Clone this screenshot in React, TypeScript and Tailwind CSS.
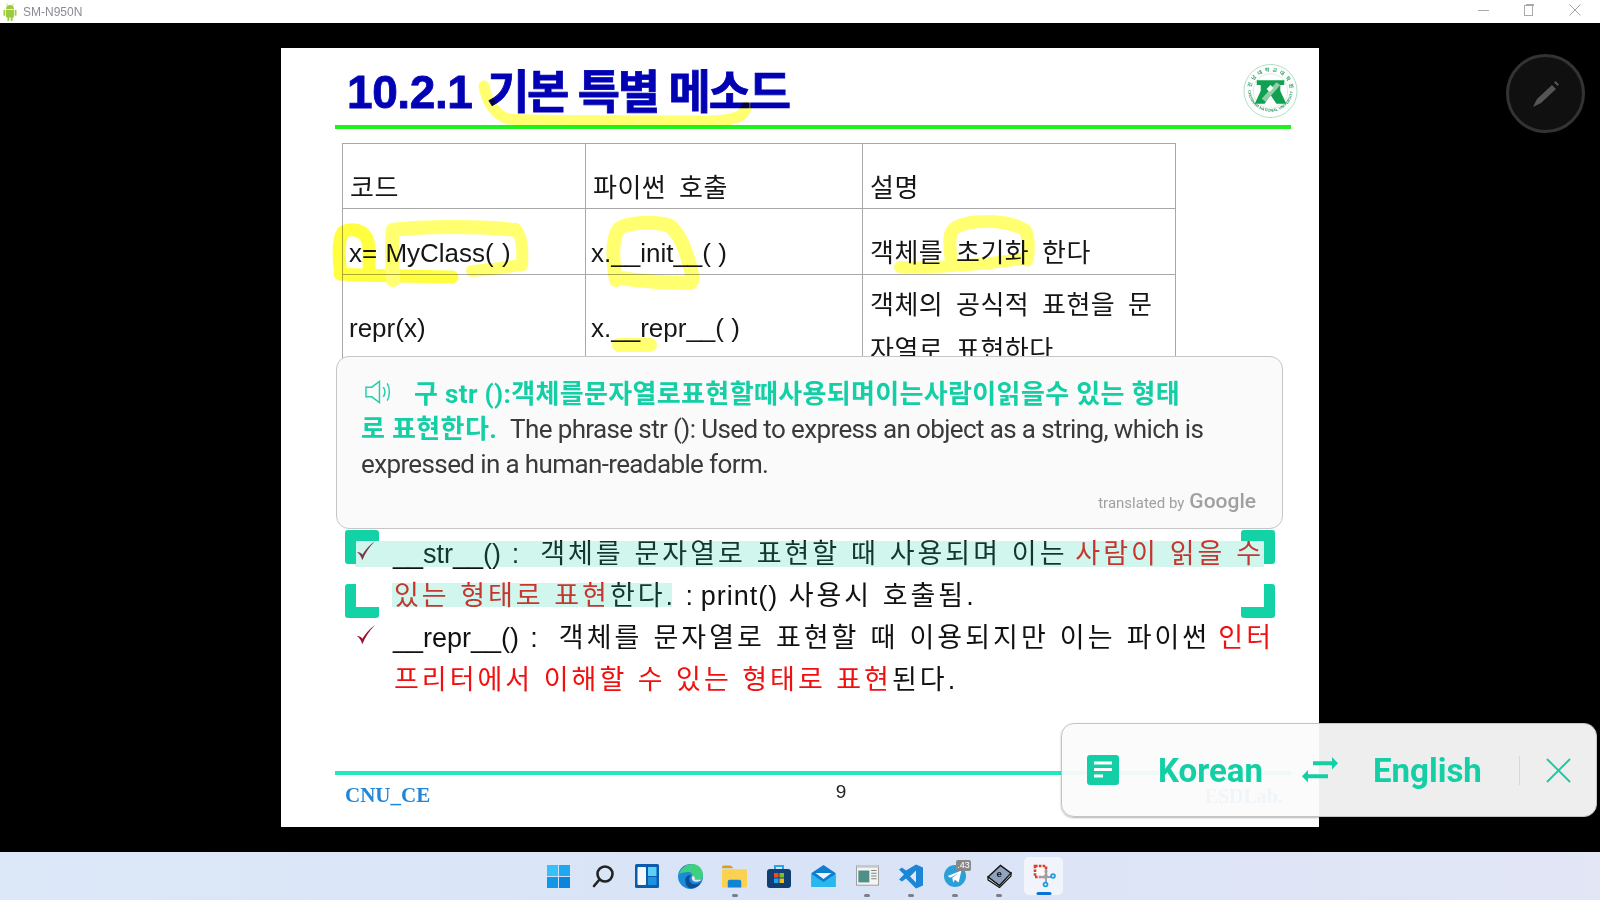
import React from 'react';

const Logo = () => (
    <svg viewBox="0 0 56 56" className="w-[55px] h-[56px] mt-[8px]">
        <defs>
            <path id="topArc" d="M8 28a20 20 0 0 1 40 0" />
            <path id="botArc" d="M5 26a23 23 0 0 0 46 0" />
        </defs>
        <circle cx="28" cy="28" r="27" fill="#fff" stroke="#8fd0a8" strokeWidth="0.7" />
        <circle cx="28" cy="28" r="17.5" fill="#fff" stroke="#b5dcc4" strokeWidth="0.5" />
        <text fontSize="5" fill="#2c9a5f" fontWeight="700" fontFamily="Noto Sans CJK KR">
            <textPath href="#topArc" startOffset="6%" textLength="56">전남대학교대학원</textPath>
        </text>
        <text fontSize="3.9" fill="#2c9a5f" fontWeight="700" fontFamily="Liberation Sans">
            <textPath href="#botArc" startOffset="2%" textLength="68">CHONNAM NATIONAL UNIVERSITY</textPath>
        </text>
        <path d="M14 17h28v5h-4v6l6 13H34l-6-9-6 9H12l6-13v-6h-4z" fill="#0fa050" />
        <path d="M19 36l15-17 4 3-15 17z" fill="#8fd0a6" />
        <path d="M24 26l4-4 3 3-4 4z" fill="#fff" />
    </svg>
);

// yellow pen marks drawn over the slide, coordinates are page pixels
const Annotations = () => (
    <svg viewBox="281 48 1037 779" className="absolute inset-0 w-[1037px] h-[779px] pointer-events-none mix-blend-multiply z-10">
        <g fill="none" stroke="#ffff70" strokeLinecap="round" strokeLinejoin="round">
            <path strokeWidth="11" d="M484 86c3 16 10 28 24 33 40 3 120 1 200 2 20 0 36-2 38-14" />
            <path strokeWidth="13" d="M341 274c-3-20-2-36 2-42 8-4 22-3 25 10 2 8 1 20 1 28" stroke="#ffff40" />
            <path strokeWidth="13" d="M340 274c30 2 74 2 112 3" stroke="#ffff40" />
            <path strokeWidth="14" d="M393 280c-1-20-2-36 0-50 30-4 88-4 122 0" />
            <path strokeWidth="12" d="M515 229c7 6 8 22 7 36-16 2-32 5-50 6" />
            <path strokeWidth="14" d="M616 280c-4-24-4-44 4-52 8-6 38-7 50-2 12 10 18 30 22 48 0 5 1 8-2 9-22 0-50-2-70-5" />
            <path strokeWidth="14" d="M619 345h31" />
            <path strokeWidth="12" d="M900 267c40 1 90-3 128-9" />
            <path strokeWidth="13" d="M951 258c-2-16-2-26 4-30 12-8 50-10 70 2 4 6 4 20 2 30" />
        </g>
    </svg>
);

const Bracket = ({ className }: { className: string }) => (
    <div className={`absolute w-[34px] h-[34px] border-[#13d3a6] rounded-[3px] z-20 ${className}`} />
);

const Check = () => (
    <svg viewBox="0 0 24 24" className="w-[22px] h-[24px]">
        <path d="M2 13c3 2 5 5 6 9 3-8 8-15 14-21-6 4-11 10-14 15-1-2-3-3-6-3z" fill="#9c1030" />
    </svg>
);

// hangul runs on the slide are spaced wider than the latin ones
const K = ({ children, red, className = '' }: { children: React.ReactNode; red?: boolean; className?: string }) => (
    <span className={`tracking-[3px] ${red ? 'text-[#f01010]' : ''} ${className}`}>{children}</span>
);

const TaskIcons = [
    <svg key="win" viewBox="0 0 24 24" className="w-[23px] h-[23px]">
        <rect x="0" y="0" width="11.5" height="11.5" fill="#35c0f7" />
        <rect x="12.5" y="0" width="11.5" height="11.5" fill="#1fa8f0" />
        <rect x="0" y="12.5" width="11.5" height="11.5" fill="#1296e8" />
        <rect x="12.5" y="12.5" width="11.5" height="11.5" fill="#0a84dc" />
    </svg>,
    <svg key="search" viewBox="0 0 24 24" className="w-[24px] h-[24px]" fill="none" stroke="#222" strokeWidth="2.6" strokeLinecap="round">
        <circle cx="14" cy="10" r="7.5" />
        <path d="M8.5 15.5L3 22" />
    </svg>,
    <svg key="widgets" viewBox="0 0 24 24" className="w-[24px] h-[24px]">
        <rect width="24" height="24" rx="1.5" fill="#0b5cad" />
        <rect x="2.5" y="3" width="8.5" height="18" rx="1" fill="#f4f7fb" />
        <rect x="13" y="3" width="8.5" height="9" fill="#5cd0f7" />
        <rect x="13" y="13" width="8.5" height="8" fill="#1e92e0" />
    </svg>,
    <svg key="edge" viewBox="0 0 24 24" className="w-[25px] h-[25px]">
        <circle cx="12" cy="12" r="12" fill="#1b8ad8" />
        <path d="M1 10C3 3 9 0 14 0c6 0 10 5 10 11 0 3-2 5-6 5-3 0-4-1-4-3 1-4-3-6-6-5-3 0-6 1-7 2z" fill="#3fcf7e" />
        <path d="M7 15c0-3 3-5 6-4-3 1-3 6 1 8 3 1 6 0 8-2-2 5-7 7-11 6-3-1-4-5-4-8z" fill="#0c4f96" />
        <path d="M14 11c2 1 3 3 2 4h7c-1 1-4 2-6 2-3 0-5-3-3-6z" fill="#dfe7f7" />
    </svg>,
    <svg key="folder" viewBox="0 0 26 24" className="w-[25px] h-[24px]">
        <path d="M0 3a2 2 0 0 1 2-2h7l3 3H0z" fill="#d99f1d" />
        <rect y="5" width="26" height="19" rx="1" fill="#fbd24f" />
        <path d="M6 24v-6a2 2 0 0 1 2-2h10a2 2 0 0 1 2 2v6z" fill="#1184d6" />
    </svg>,
    <svg key="store" viewBox="0 0 24 24" className="w-[24px] h-[24px]">
        <path d="M8 6V2h8v4" fill="none" stroke="#2ba4e8" strokeWidth="2" />
        <rect y="5" width="24" height="19" rx="3" fill="#123f72" />
        <rect x="7" y="9" width="4.5" height="4.5" fill="#ef4b2b" />
        <rect x="12.5" y="9" width="4.5" height="4.5" fill="#7cbd2a" />
        <rect x="7" y="14.5" width="4.5" height="4.5" fill="#1ba6ee" />
        <rect x="12.5" y="14.5" width="4.5" height="4.5" fill="#fbb81b" />
    </svg>,
    <svg key="mail" viewBox="0 0 24 24" className="w-[25px] h-[24px]">
        <path d="M0 9l12-8 12 8v14H0z" fill="#0f7ecf" />
        <path d="M4 9h16l-8 6z" fill="#eef6fb" />
        <path d="M0 10l12 8 12-8v13H0z" fill="#2ab7ee" />
    </svg>,
    <svg key="app" viewBox="0 0 24 24" className="w-[23px] h-[22px]">
        <rect width="24" height="22" fill="#f4f4f4" stroke="#999" />
        <rect y="0" width="24" height="3" fill="#c8c8c8" />
        <rect x="2" y="6" width="12" height="13" fill="#4f8f88" />
        <path d="M16 6h6M16 9h6M16 12h6M16 15h6" stroke="#777" />
    </svg>,
    <svg key="code" viewBox="0 0 24 24" className="w-[24px] h-[25px]">
        <path d="M17 0l7 3v18l-7 3-10-10-4 3-3-2 5-5-5-5 3-2 4 3z" fill="#1b85d6" />
        <path d="M17 6l-6 6 6 6z" fill="#dfe7f7" />
    </svg>,
    <div key="tg" className="relative">
        <svg viewBox="0 0 24 24" className="w-[22px] h-[22px]">
            <circle cx="12" cy="12" r="12" fill="#2a9fd8" />
            <path d="M4 12l15-6-3 13-4-3-2 3-1-5 7-5-9 5z" fill="#fff" />
        </svg>
        <span className="absolute left-[12px] -top-[5px] bg-[#888] text-white text-[9px] leading-[11px] px-[1px] rounded-[2px] font-['Liberation_Sans',sans-serif]">.43</span>
    </div>,
    <svg key="book" viewBox="0 0 26 24" className="w-[25px] h-[24px]">
        <path d="M1 13L14 1l11 8-12 13z" fill="#8ea3bd" stroke="#111" strokeWidth="1.4" />
        <path d="M1 13l12 9 12-13v3L13 24 1 16z" fill="#eee" stroke="#111" strokeWidth="1.2" />
        <text x="10" y="13" fontSize="10" fontWeight="700" fill="#111" fontFamily="Liberation Sans">e</text>
    </svg>,
    <svg key="snip" viewBox="0 0 24 24" className="relative w-[24px] h-[24px]">
        <rect x="3" y="2" width="11" height="11" fill="#fbfbfd" />
        <rect x="3" y="2" width="11" height="11" fill="none" stroke="#d6402c" strokeWidth="2.6" strokeDasharray="2.6 1.2" />
        <path d="M14 5v14M7 13h14" fill="none" stroke="#9aa1aa" strokeWidth="2" />
        <circle cx="21" cy="12" r="2.8" fill="#1b9be0" />
        <circle cx="13.5" cy="20.5" r="2.8" fill="#1b9be0" />
        <path d="M19.8 12h2.4M21 10.8v2.4M12.3 20.5h2.4M13.5 19.3v2.4" stroke="#fff" strokeWidth="0.8" />
    </svg>,
];

// which taskbar icons carry a running dot
const dotted = [4, 7, 8, 9, 10];

const App = () => {
    return (
        <div className="relative w-[1600px] h-[900px] overflow-hidden flex flex-col bg-black font-['Liberation_Sans','Noto_Sans_CJK_KR',sans-serif]">
            {/* title bar */}
            <div className="h-[23px] shrink-0 bg-white flex items-center pl-[3px]">
                <svg viewBox="0 0 14 18" className="w-[14px] h-[18px]" fill="#9ccb3c">
                    <path d="M3 6a4 4 0 0 1 8 0z" />
                    <path d="M4.5 2.5L3.5 0.5M9.5 2.5l1-2" stroke="#9ccb3c" strokeWidth="0.7" />
                    <path d="M3 6.8h8v6.7a1 1 0 0 1-1 1H4a1 1 0 0 1-1-1z" />
                    <rect x="0.5" y="6.8" width="1.8" height="6" rx="0.9" />
                    <rect x="11.7" y="6.8" width="1.8" height="6" rx="0.9" />
                    <rect x="4.4" y="13.5" width="1.9" height="4.5" rx="0.9" />
                    <rect x="7.7" y="13.5" width="1.9" height="4.5" rx="0.9" />
                </svg>
                <span className="ml-[6px] text-[12px] text-[#8a8a94]">SM-N950N</span>
                <div className="ml-auto flex items-center gap-[34px] pr-[19px] pb-[3px]">
                    <div className="w-[11px] h-px bg-[#aaa] mr-[1px]" />
                    <div className="relative w-[9px] h-[11px] border border-[#aaa] mr-[2px]">
                        <div className="absolute -top-[2px] left-[1px] w-[8px] h-[2px] border-t border-r border-[#aaa]" />
                    </div>
                    <svg viewBox="0 0 12 12" className="w-[12px] h-[12px]" stroke="#999" strokeWidth="0.9">
                        <path d="M0.5 0.5l11 11M11.5 0.5l-11 11" />
                    </svg>
                </div>
            </div>

            {/* mirrored phone screen */}
            <div className="relative flex-1 pl-[281px] pt-[25px]">
                <div className="relative w-[1038px] h-[779px] bg-white overflow-hidden">
                    <div className="h-[77px] pl-[66px] pr-[21px] flex items-center justify-between">
                        <h1 className="pt-[12px] text-[46px] font-bold text-[#0202b4] tracking-[-0.4px] [word-spacing:2px] [-webkit-text-stroke:0.8px_#0202b4]">
                            10.2.1 <span className="tracking-[-2.2px] [word-spacing:0px]">기본 특별 메소드</span>
                        </h1>
                        <Logo />
                    </div>
                    <div className="ml-[54px] w-[956px] h-[4px] bg-[#1ff01f]" />

                    <div className="ml-[61px] mt-[14px] h-[389px] overflow-hidden">
                        <table className="w-[834px] table-fixed border-collapse text-[26px] text-[#161616]">
                            <colgroup>
                                <col className="w-[243px]" />
                                <col className="w-[277px]" />
                                <col />
                            </colgroup>
                            <tbody>
                                <tr className="h-[65px]">
                                    <td className="border border-[#a8a8a8] px-[7px] pt-[24px] tracking-[0.5px] [word-spacing:5px]">코드</td>
                                    <td className="border border-[#a8a8a8] px-[7px] pt-[24px] tracking-[0.5px] [word-spacing:5px]">파이썬 호출</td>
                                    <td className="border border-[#a8a8a8] px-[7px] pt-[24px] tracking-[0.5px] [word-spacing:5px]">설명</td>
                                </tr>
                                <tr className="h-[66px]">
                                    <td className="border border-[#a8a8a8] px-[6px] pt-[24px] [word-spacing:1px]">x= MyClass( )</td>
                                    <td className="border border-[#a8a8a8] px-[5px] pt-[24px]">x.__init__( )</td>
                                    <td className="border border-[#a8a8a8] px-[7px] pt-[24px] tracking-[0.5px] [word-spacing:5px]">객체를 초기화 한다</td>
                                </tr>
                                <tr>
                                    <td className="border border-[#a8a8a8] px-[6px] pt-[8px]">repr(x)</td>
                                    <td className="border border-[#a8a8a8] px-[5px] pt-[8px]">x.__repr__( )</td>
                                    <td className="border border-[#a8a8a8] px-[7px] leading-[45px] pt-[8px] tracking-[0.5px] [word-spacing:5px]">객체의 공식적 표현을 문자열로 표현하다</td>
                                </tr>
                            </tbody>
                        </table>
                    </div>

                    <div className="relative pt-px text-[27px] leading-[42px] text-[#111]">
                        <div className="flex pl-[74px]">
                            <div className="w-[38px] pt-[6px]"><Check /></div>
                            <div className="w-[871px] [text-align-last:justify]">
                                __str__() <span className="ml-[3px]">:</span> <K className="ml-[13px]">객체를 문자열로 표현할 때 사용되며 이는</K> <K red>사람이 읽을 수</K>
                            </div>
                        </div>
                        <div className="pl-[113px]">
                            <K red>있는 형태로 표현</K><K>한다.</K> <span className="ml-[2px]">:</span> <span className="tracking-[1px]">print()</span> <K className="ml-[3px]">사용시 호출됨.</K>
                        </div>
                        <div className="flex pl-[74px]">
                            <div className="w-[38px] pt-[6px]"><Check /></div>
                            <div className="w-[881px] [text-align-last:justify]">
                                __repr__() <span className="ml-[3px]">:</span> <K className="ml-[13px]">객체를 문자열로 표현할 때 이용되지만 이는 파이썬</K> <K red>인터</K>
                            </div>
                        </div>
                        <div className="pl-[113px]">
                            <K red>프리터에서 이해할 수 있는 형태로 표현</K><K>된다.</K>
                        </div>
                        {/* highlight marks */}
                        <div className="absolute left-[74px] top-[9px] w-[909px] h-[26px] bg-[#14d3a8]/20" />
                        <div className="absolute left-[111px] top-[51px] w-[280px] h-[24px] bg-[#14d3a8]/20" />
                    </div>

                    <div className="ml-[54px] w-[956px] mt-[70px] h-[4px] bg-[#22e8c0]" />
                    <div className="ml-[54px] w-[956px] mt-[5px] grid grid-cols-[486px_40px_1fr] items-center">
                        <span className="pl-[10px] text-[21px] font-bold text-[#1f86d8] font-['Liberation_Serif',serif]">CNU_CE</span>
                        <span className="self-start text-center text-[19px] leading-[24px] text-[#222]">9</span>
                        <span className="text-right pr-[8px] text-[20px] font-bold text-[#1f86d8] font-['Liberation_Serif',serif]">ESDLab.</span>
                    </div>

                    <Annotations />

                    {/* selection handles */}
                    <Bracket className="left-[64px] top-[482px] border-l-[11px] border-t-[11px]" />
                    <Bracket className="left-[64px] top-[536px] border-l-[11px] border-b-[11px]" />
                    <Bracket className="left-[960px] top-[482px] border-r-[11px] border-t-[11px]" />
                    <Bracket className="left-[960px] top-[536px] border-r-[11px] border-b-[11px]" />

                    {/* translation popup */}
                    <div className="absolute left-[55px] top-[308px] w-[947px] h-[173px] z-20 bg-[#fafafa] border border-[#c6c6c6] rounded-[13px] pl-[24px] pr-[20px] pt-[20px] text-[26px] leading-[35px] text-[#3a3a3a] tracking-[-0.62px] font-['Roboto','Noto_Sans_CJK_KR',sans-serif]">
                        <svg viewBox="0 0 28 26" className="inline-block w-[27px] h-[26px] ml-[4px] mr-[22px] -mt-[8px]" fill="none" stroke="#1fd0a8" strokeWidth="1.5">
                            <path d="M1 8h6l8-6v22l-8-6H1z" />
                            <path d="M19 8c2 3 2 7 0 10M23 4c3 5 3 13 0 18" />
                        </svg>
                        <span className="font-bold text-[#14cfa5] tracking-[0.35px]">구 str ():객체를문자열로표현할때사용되며이는사람이읽을수 있는 형태<br />로 표현한다.</span>
                        <span className="ml-[13px]">The phrase str (): Used to express an object as a string, which is</span>
                        <br />expressed in a human-readable form.
                        <div className="absolute right-[26px] bottom-[16px] flex items-baseline gap-[5px] text-[#a0a0a0] leading-none tracking-normal">
                            <span className="text-[15px]">translated by</span>
                            <span className="text-[21px] font-medium">Google</span>
                        </div>
                    </div>
                </div>

                {/* pen button */}
                <div className="absolute left-[1506px] top-[31px] w-[79px] h-[79px] rounded-full bg-[#101010] border-[3px] border-[#333] flex items-center justify-center">
                    <svg viewBox="0 0 30 30" className="w-[30px] h-[30px]" fill="#555">
                        <path d="M2 28l4-8L21 6l4 4L10 24z" />
                        <path d="M23 3.5l1.5-1.5 3.5 3.5-1.5 1.5z" />
                    </svg>
                </div>
            </div>

            {/* language bar */}
            <div className="absolute left-[1061px] top-[723px] w-[536px] h-[94px] z-30 flex items-center rounded-[13px] bg-[#fbfbfb]/95 border border-[#c4c4c4] shadow-[0_1px_2px_rgba(0,0,0,0.3)] text-[#14cfa5] font-['Roboto',sans-serif]">
                <svg viewBox="0 0 32 30" className="ml-[25px] w-[32px] h-[30px]">
                    <rect width="32" height="30" rx="3" fill="#14cfa5" />
                    <path d="M7 8h18M7 14.5h18M7 21h9" stroke="#fff" strokeWidth="3" />
                </svg>
                <span className="ml-[39px] w-[105px] text-[33px] font-bold leading-none">Korean</span>
                <svg viewBox="0 0 36 26" className="ml-[39px] w-[36px] h-[26px]" fill="#14cfa5">
                    <path d="M11 4.2h19v4H11zM30 0l6 6.2-6 6.2z" />
                    <path d="M6 17.2h20v4H6zM6 13L0 19.2l6 6.2z" />
                </svg>
                <span className="ml-[35px] w-[109px] text-[33px] font-bold leading-none">English</span>
                <div className="ml-[37px] w-px h-[29px] bg-[#d8d8d8]" />
                <svg viewBox="0 0 26 26" className="ml-[26px] w-[25px] h-[25px]" stroke="#14cfa5" strokeWidth="2">
                    <path d="M1 1l24 24M25 1L1 25" />
                </svg>
            </div>

            {/* taskbar */}
            <div className="h-[48px] shrink-0 flex justify-center pl-[2px] bg-gradient-to-r from-[#dce8f8] via-[#d9e3f7] to-[#e2e6f5]">
                {TaskIcons.map((icon, i) => (
                    <div key={i} className="relative w-[44.1px] h-[48px] flex items-center justify-center">
                        {i === 11 && (
                            <div className="absolute inset-x-[3px] top-[5px] h-[38px] bg-[#f1f4fb] rounded-[5px]">
                                <div className="absolute left-1/2 -translate-x-1/2 bottom-0 w-[15px] h-[3px] rounded-full bg-[#0a74d4]" />
                            </div>
                        )}
                        {icon}
                        {dotted.includes(i) && <div className="absolute left-1/2 -translate-x-1/2 bottom-[3px] w-[6px] h-[3px] rounded-full bg-[#7a7f88]" />}
                    </div>
                ))}
            </div>
        </div>
    );
};

export default App;
